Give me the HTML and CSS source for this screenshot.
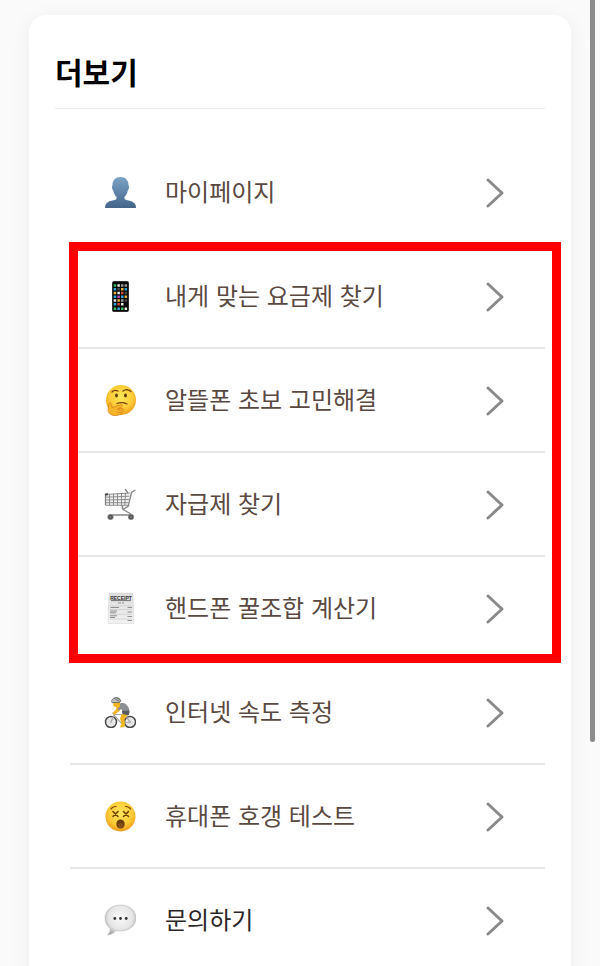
FILE: index.html
```html
<!DOCTYPE html>
<html lang="ko">
<head>
    <meta charset="UTF-8">
    <meta name="viewport" content="width=device-width, initial-scale=1">
    <title>더보기</title>
    <link rel="stylesheet" href="styles.css">
</head>
<body>
    <svg class="defs" aria-hidden="true">
        <defs>
            <linearGradient id="blue" x2="0" y2="1">
                <stop offset="0" stop-color="#7ba3c6"/>
                <stop offset="1" stop-color="#436589"/>
            </linearGradient>
            <radialGradient id="face" cx=".5" cy=".4" r=".6">
                <stop offset="0" stop-color="#ffe85a"/>
                <stop offset=".65" stop-color="#fdcb35"/>
                <stop offset="1" stop-color="#ef9c1c"/>
            </radialGradient>
            <radialGradient id="bubble" cx=".5" cy=".42" r=".6">
                <stop offset="0" stop-color="#fafafa"/>
                <stop offset=".65" stop-color="#e6e6e6"/>
                <stop offset="1" stop-color="#a8a8a8"/>
            </radialGradient>
            <linearGradient id="paper" x2="0" y2="1">
                <stop offset="0" stop-color="#dedede"/>
                <stop offset="1" stop-color="#f1f1f1"/>
            </linearGradient>
            <symbol id="arrow" viewBox="0 0 18 32">
                <path d="M2 4L16 17L2 30" fill="none" stroke="#8a8a8a" stroke-width="3" stroke-linecap="round" stroke-linejoin="round"/>
            </symbol>
        </defs>
    </svg>
    <div class="page">
        <main class="card">
            <h1 class="card-title">더보기</h1>
            <nav class="menu">
                <a class="menu-item" href="#mypage">
                    <svg class="icon" viewBox="0 0 32 32">
                        <path fill="url(#blue)" d="M16.500 1C21.300 1 24.700 4 24.500 9.500C25.500 10 25 13.500 23.800 14.500C23.300 17.500 22 19.500 20.500 20.800V22.800C21.500 24.500 25 24 28 25.500C31 26.800 32 29 32 32H1C1 29 2 26.800 5 25.500C8 24 11.500 24.500 12.500 22.800V20.800C11 19.500 9.700 17.500 9.200 14.500C8 13.500 7.500 10 8.500 9.500C8.300 4 11.700 1 16.500 1Z"/>
                    </svg>
                    <span class="label">마이페이지</span>
                    <svg class="arrow"><use href="#arrow"/></svg>
                </a>
                <div class="highlight">
                    <a class="menu-item" href="#plan">
                        <svg class="icon" viewBox="0 0 32 32">
                            <rect x="8" y="1" width="17" height="31" rx="2" fill="#555"/>
                            <rect x="8.500" y="1.500" width="16" height="30" rx="1.500" fill="#080808"/>
                            <g fill="none" stroke-width="2.400">
                                <path stroke="#39bf63" d="M9.700 5.500h2.500M9.700 28.800h2.500M17 28.800h2.500"/>
                                <path stroke="#e8e8e8" d="M13.400 5.500h2.500M13.400 13h2.500M9.700 20.500h2.500M20.600 28.800h2.500M17 24.200h2.500"/>
                                <path stroke="#999" d="M17 5.500h2.500M20.600 5.500h2.500M17 20.500h2.500"/>
                                <path stroke="#2fa6df" d="M9.700 9.200h2.500M20.600 9.200h2.500M9.700 16.800h2.500M17 16.800h2.500M9.700 24.200h2.500M13.400 28.800h2.500"/>
                                <path stroke="#f2b13d" d="M9.700 13h2.500M17 9.200h2.500M20.600 16.800h2.500M13.400 20.500h2.500"/>
                                <path stroke="#d84b36" d="M17 13h2.500M13.400 24.200h2.500"/>
                                <path stroke="#c447c6" d="M13.400 16.800h2.500"/>
                                <path stroke="#484848" d="M13.400 9.200h2.500M20.600 13h2.500M20.600 20.500h2.500"/>
                            </g>
                        </svg>
                        <span class="label">내게 맞는 요금제 찾기</span>
                        <svg class="arrow"><use href="#arrow"/></svg>
                    </a>
                    <a class="menu-item" href="#help">
                        <svg class="icon" viewBox="0 0 32 32">
                            <circle cx="17" cy="16" r="15" fill="url(#face)"/>
                            <g fill="#60370e">
                                <ellipse cx="12.500" cy="11.500" rx="1.400" ry="1.900"/>
                                <ellipse cx="21.500" cy="11.500" rx="1.400" ry="1.900"/>
                            </g>
                            <g fill="none" stroke="#70420d" stroke-width="1.300" stroke-linecap="round">
                                <path d="M8 8Q10 5.500 14 7"/>
                                <path d="M19 7Q23 4 27 7.500"/>
                                <path d="M13 19.500Q18 17.500 23 20"/>
                            </g>
                            <path fill="#f7b52b" stroke="#d98217" stroke-width=".8" d="M5 19.500C6 18 7.500 18.800 7.600 20.500L8 23.500L16.500 20.800C18.500 20.300 19.200 22 17.500 23L14 24.700L18 24.500C20 24.600 20 26.500 18.500 27C18.500 30 14 32 10 31.500C6 31 4 28.500 4 25.500Z"/>
                            <path fill="none" stroke="#d98217" stroke-width=".7" d="M13 25.200L18 27M12.500 28L17 28.800"/>
                        </svg>
                        <span class="label">알뜰폰 초보 고민해결</span>
                        <svg class="arrow"><use href="#arrow"/></svg>
                    </a>
                    <a class="menu-item" href="#device">
                        <svg class="icon" viewBox="0 0 32 32">
                            <path fill="#f0f0f0" d="M1.500 6L25.500 5L24 17L2 17Z"/>
                            <g fill="none" stroke="#858585">
                                <path stroke-width=".9" d="M1.500 6.500L26 5M1.500 9.200L25.500 8.200M1.500 12L25 11.500M1.500 14.700H24.500M2 17.300H24.500M5.500 6V17.300M9.500 5.800V17.300M13.500 5.500V17.300M17.500 5.200V17.300M21.500 4.900L20.800 17.300"/>
                                <path stroke-width="1.300" d="M1.500 6V17.300M31.500 2L27.500 4.500L24.300 18L19 21.500L27 26M21 1L24 5"/>
                                <path stroke-width="1.500" d="M5.500 28.500L8 27H27.500M18.500 17.500V21"/>
                            </g>
                            <path stroke="#444" stroke-width="2" d="M1 6.500L4 6.200"/>
                            <g fill="#525252" stroke="#999" stroke-width=".6">
                                <circle cx="6.500" cy="29" r="2.800"/>
                                <circle cx="27" cy="29" r="2.800"/>
                            </g>
                            <g fill="#aaa">
                                <circle cx="6.500" cy="29" r=".8"/>
                                <circle cx="27" cy="29" r=".8"/>
                            </g>
                        </svg>
                        <span class="label">자급제 찾기</span>
                        <svg class="arrow"><use href="#arrow"/></svg>
                    </a>
                    <a class="menu-item" href="#calculator">
                        <svg class="icon" viewBox="0 0 32 32">
                            <path fill="url(#paper)" stroke="#d2d2d2" stroke-width=".5" d="M5 1H29L30 31.500H4Z"/>
                            <text class="receipt-text" x="17" y="7.500">RECEIPT</text>
                            <g fill="none" stroke="#777" stroke-width=".8">
                                <path stroke="#555" d="M7 8.600H27"/>
                                <path d="M14 11H17M18 11H20M6.500 15.500H15M6 19H13M6 20.800H12M6 23.800H13M6 25.500H11"/>
                                <path d="M23.500 15.500H28M23.500 20H28M23.500 24.500H28M23.500 28.500H28"/>
                                <path stroke="#bbb" stroke-width=".5" d="M6 14H28M6 17.500H28M6 22.300H28M6 27H28"/>
                            </g>
                        </svg>
                        <span class="label">핸드폰 꿀조합 계산기</span>
                        <svg class="arrow"><use href="#arrow"/></svg>
                    </a>
                </div>
                <a class="menu-item" href="#speed">
                    <svg class="icon" viewBox="0 0 32 32">
                        <g fill="#f4f4f4" stroke="#484848" stroke-width="1.500">
                            <circle cx="7" cy="26" r="5.500"/>
                            <circle cx="26" cy="26" r="5.500"/>
                        </g>
                        <path fill="none" stroke="#b5b5b5" stroke-width=".5" d="M2 26H12M7 21V31M3.500 22.500L10.500 29.500M10.500 22.500L3.500 29.500M21 26H31M26 21V31M22.500 22.500L29.500 29.500M29.500 22.500L22.500 29.500"/>
                        <path fill="none" stroke="#aaa" stroke-width="1.200" d="M7 26L10 18.500H21L17 27L10 19M17 27L26 26L21 18.500M8 17L12 18"/>
                        <path fill="#f4b521" d="M9 5.500H16L16 10L17.500 12L15.500 15L10 19L8.500 17L12 13.500L12.500 11L9.500 10.500Z"/>
                        <path fill="#8c8f91" d="M16 7.500C20 6 23 8 25 12.500L25.500 17L19 18L17.500 13L14.500 14.500L13.500 12.500L16 10.500Z"/>
                        <path fill="#565b5e" d="M18 15L25.500 14.500L25 19L19 20.500Z"/>
                        <path fill="#f4b521" d="M17.500 18L23.500 19L20.500 23L21 29L18 29L16 22.500Z"/>
                        <path fill="#f4b521" d="M17 28.500L21 28L20.500 31L16 31.500Z"/>
                        <path fill="#bec1c2" stroke="#5d6062" stroke-width=".8" d="M7.500 5.500C8.500 .5 15 .2 17 5L15 6.500L8 6.500Z"/>
                        <path fill="none" stroke="#55595b" stroke-width=".8" d="M10.500 2.500L15.500 5.500M13 1.800L16.500 4"/>
                    </svg>
                    <span class="label">인터넷 속도 측정</span>
                    <svg class="arrow"><use href="#arrow"/></svg>
                </a>
                <a class="menu-item" href="#test">
                    <svg class="icon" viewBox="0 0 32 32">
                        <circle cx="16.500" cy="16.500" r="15" fill="url(#face)"/>
                        <g fill="none" stroke="#744106" stroke-linecap="round">
                            <path stroke-width="1.600" d="M9 11.500L14 16.500M14 11.500L9 16.500M19.500 11.500L24.500 16.500M24.500 11.500L19.500 16.500"/>
                            <path stroke-width="1.200" d="M7 9Q8.500 6.500 12 6.500M21.500 6.500Q25 6.500 26.500 9"/>
                        </g>
                        <ellipse cx="16.500" cy="24" rx="4.200" ry="4.500" fill="#6c3b09"/>
                        <ellipse cx="16.500" cy="25.500" rx="2.800" ry="2.500" fill="#84501a"/>
                    </svg>
                    <span class="label">휴대폰 호갱 테스트</span>
                    <svg class="arrow"><use href="#arrow"/></svg>
                </a>
                <a class="menu-item contact" href="#contact">
                    <svg class="icon" viewBox="0 0 32 32">
                        <path fill="url(#bubble)" stroke="#b5b5b5" stroke-width=".5" d="M16.500 1C25.500 1 32 6.500 32 14C32 21.500 25.500 27 16.500 27C15 27 13.500 26.900 12 26.600C10 29 7 31 3.500 31C5.500 29 6.500 27 6.200 24.500C3 22 1 18.500 1 14C1 6.500 7.500 1 16.500 1Z"/>
                        <g fill="#333">
                            <circle cx="10.800" cy="14.500" r="1.400"/>
                            <circle cx="16.500" cy="14.500" r="1.400"/>
                            <circle cx="22.200" cy="14.500" r="1.400"/>
                        </g>
                    </svg>
                    <span class="label">문의하기</span>
                    <svg class="arrow"><use href="#arrow"/></svg>
                </a>
            </nav>
        </main>
    </div>
    <div class="scroll-thumb"></div>
</body>
</html>
```

FILE: styles.css
```css
* {
    box-sizing: border-box;
}
body {
    margin: 0;
    background: #fafafa;
    color: #000;
    font-family: "Noto Sans CJK KR", sans-serif;
}
.defs {
    position: absolute;
    width: 0;
    height: 0;
}
.page {
    height: 100vh;
    padding: 15px 29px;
    overflow: hidden;
}
.card {
    padding: 34px 26px 40px;
    border-radius: 17px;
    background: #fff;
    box-shadow: 0 4px 20px rgba(0, 0, 0, 0.06);
}
.card-title {
    margin: 0 0 32px;
    padding-bottom: 15px;
    border-bottom: 1px solid #ececec;
    font-size: 30px;
    font-weight: 700;
    line-height: 44px;
}
.menu {
    margin-left: 15px;
}
.menu-item {
    display: flex;
    align-items: center;
    height: 104px;
    padding: 0 41px 0 34px;
    border-bottom: 2px solid #e8e8e8;
    color: #5a4941;
    font-size: 24px;
    line-height: 36px;
    text-decoration: none;
}
.contact {
    color: #2b2729;
}
.icon {
    flex: none;
    width: 32px;
    height: 32px;
    margin-right: 29px;
}
.label {
    flex: 1;
    padding-bottom: 2px;
}
.arrow {
    flex: none;
    width: 18px;
    height: 32px;
}
.receipt-text {
    fill: #333;
    font: bold 5px "Liberation Sans", sans-serif;
    text-anchor: middle;
}
/* red frame drawn over the group of rows */
.highlight {
    position: relative;
}
.highlight::after {
    content: "";
    position: absolute;
    inset: -3px -16px -2px -1px;
    border: 9px solid #f00;
    pointer-events: none;
}
.scroll-thumb {
    position: fixed;
    top: 0;
    right: 5px;
    width: 5px;
    height: 742px;
    border-radius: 0 0 3px 3px;
    background: #8b8b8b;
}
```
